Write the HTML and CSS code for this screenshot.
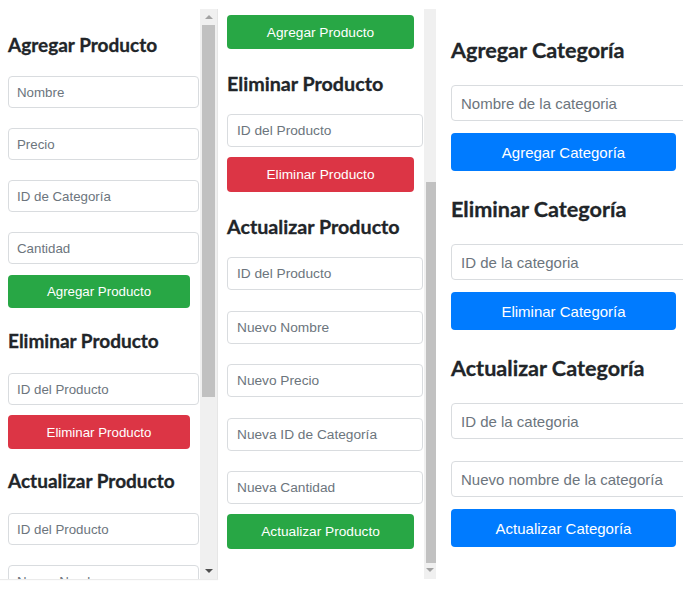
FILE: index.html
```html
<!DOCTYPE html>
<html lang="es">
<head>
<meta charset="utf-8">
<title>Productos y Categorías</title>
<link rel="stylesheet" href="styles.css">
</head>
<body class="stage">
  <section class="shot shot-left">
    <div class="view view-left">
      <h2 class="title t-first">Agregar Producto</h2>
      <input class="field f-first" type="text" placeholder="Nombre">
      <input class="field" type="text" placeholder="Precio">
      <input class="field" type="text" placeholder="ID de Categoría">
      <input class="field" type="text" placeholder="Cantidad">
      <button class="btn btn-green">Agregar Producto</button>
      <h2 class="title">Eliminar Producto</h2>
      <input class="field f-first" type="text" placeholder="ID del Producto">
      <button class="btn btn-red">Eliminar Producto</button>
      <h2 class="title t-tight">Actualizar Producto</h2>
      <input class="field f-first" type="text" placeholder="ID del Producto">
      <input class="field" type="text" placeholder="Nuevo Nombre">
    </div>
    <div class="sbar sbar-left">
      <div class="arrow arrow-up light"></div>
      <div class="thumb"></div>
      <div class="rest"></div>
      <div class="arrow arrow-down"></div>
    </div>
  </section>

  <section class="shot shot-mid">
    <div class="view view-mid">
      <button class="btn btn-green b-top">Agregar Producto</button>
      <h2 class="title">Eliminar Producto</h2>
      <input class="field f-first" type="text" placeholder="ID del Producto">
      <button class="btn btn-red">Eliminar Producto</button>
      <h2 class="title">Actualizar Producto</h2>
      <input class="field f-first" type="text" placeholder="ID del Producto">
      <input class="field" type="text" placeholder="Nuevo Nombre">
      <input class="field" type="text" placeholder="Nuevo Precio">
      <input class="field" type="text" placeholder="Nueva ID de Categoría">
      <input class="field" type="text" placeholder="Nueva Cantidad">
      <button class="btn btn-green">Actualizar Producto</button>
    </div>
    <div class="sbar sbar-mid">
      <div class="rest rest-top"></div>
      <div class="thumb"></div>
      <div class="arrow arrow-down light"></div>
    </div>
  </section>

  <section class="shot shot-right">
    <div class="view view-right">
      <h2 class="title t-first">Agregar Categoría</h2>
      <input class="field f-first" type="text" placeholder="Nombre de la categoria">
      <button class="btn btn-blue">Agregar Categoría</button>
      <h2 class="title">Eliminar Categoría</h2>
      <input class="field f-first" type="text" placeholder="ID de la categoria">
      <button class="btn btn-blue">Eliminar Categoría</button>
      <h2 class="title">Actualizar Categoría</h2>
      <input class="field f-first" type="text" placeholder="ID de la categoria">
      <input class="field" type="text" placeholder="Nuevo nombre de la categoría">
      <button class="btn btn-blue">Actualizar Categoría</button>
    </div>
  </section>
</body>
</html>
```

FILE: styles.css
```css
* { box-sizing: border-box; }

html, body { background: #ffffff; }

.stage {
  margin: 0;
  padding-top: 9px;
  display: flex;
  align-items: flex-start;
  font-family: "Liberation Sans", Arial, sans-serif;
  overflow: hidden;
  height: 589px;
}

.shot {
  display: flex;
  height: 570px;
  overflow: hidden;
  background: #ffffff;
  flex: none;
}

.shot-left {
  width: 218px;
  border-right: 1px solid #e6e6e6;
  box-shadow: 0 1px 1px rgba(0, 0, 0, 0.08);
}
.shot-mid { width: 220px; }
.shot-right { width: 245px; }

.view {
  display: flex;
  flex-direction: column;
  align-items: flex-start;
  overflow: hidden;
  flex: none;
}

/* headings */
.title {
  margin: 0;
  font-family: "Lato", "Open Sans", sans-serif;
  font-weight: 700;
  color: #212529;
  -webkit-text-stroke: 0.3px #212529;
  white-space: nowrap;
}

/* inputs */
.field {
  display: block;
  flex: none;
  border: 1px solid #d9dcdf;
  border-radius: 4px;
  background: #ffffff;
  font-family: "Liberation Sans", Arial, sans-serif;
  color: #495057;
  outline: none;
}
.field::placeholder { color: #6c757d; opacity: 1; }

/* buttons */
.btn {
  display: block;
  flex: none;
  border: none;
  border-radius: 4px;
  color: #ffffff;
  font-family: "Liberation Sans", Arial, sans-serif;
  text-align: center;
  padding: 0;
}
.btn-green { background: #28a745; }
.btn-red { background: #dc3545; }
.btn-blue { background: #007bff; }

/* ---------- left shot ---------- */
.view-left {
  width: 200px;
  padding-left: 8px;
}
.view-left .title { font-size: 19px; line-height: 24px; margin-top: 21px; }
.view-left .title.t-first { margin-top: 24px; }
.view-left .title.t-tight { margin-top: 20px; }
.view-left .field {
  width: 191px;
  height: 32px;
  margin-top: 20px;
  padding: 0 8px;
  font-size: 13.3px;
}
.view-left .field.f-first { margin-top: 20px; }
.view-left .title.t-first + .field { margin-top: 19px; }
.view-left .btn {
  width: 182px;
  height: 33px;
  margin-top: 11px;
  font-size: 13.3px;
}
.view-left .btn-red { height: 34px; margin-top: 10px; }

.sbar {
  display: flex;
  flex-direction: column;
  background: #f0f0f0;
  flex: none;
  height: 100%;
}
.sbar-left { width: 17px; }
.sbar-left .thumb {
  height: 372px;
  margin: 0 2px;
  background: #c1c1c1;
}
.rest { flex: 1; }

.arrow {
  height: 16px;
  flex: none;
  display: flex;
  align-items: center;
  justify-content: center;
}
.arrow::before {
  content: "";
  width: 0;
  height: 0;
  border-left: 4px solid transparent;
  border-right: 4px solid transparent;
}
.arrow-up::before { border-bottom: 4px solid #505050; }
.arrow-down::before { border-top: 4px solid #505050; }
.arrow-up.light::before { border-bottom-color: #a3a3a3; }
.arrow-down.light::before { border-top-color: #a3a3a3; }

/* ---------- middle shot ---------- */
.view-mid {
  width: 206px;
  padding-left: 9px;
}
.view-mid .title { font-size: 19.7px; line-height: 25px; margin-top: 22px; }
.view-mid .field {
  width: 196px;
  height: 33px;
  margin-top: 20.5px;
  padding: 0 9px;
  font-size: 13.7px;
}
.view-mid .field.f-first { margin-top: 18px; }
.view-mid .btn {
  width: 187px;
  height: 35px;
  margin-top: 10px;
  font-size: 13.7px;
}
.view-mid .btn.b-top { margin-top: 6px; height: 34px; }

.sbar-mid { width: 12px; }
.sbar-mid .rest-top { flex: none; height: 173px; }
.sbar-mid .thumb {
  height: 381px;
  margin-left: 2px;
  background: #c1c1c1;
}
.sbar-mid .arrow { flex: 1; align-items: flex-start; padding-top: 5px; }

/* ---------- right shot ---------- */
.view-right {
  width: 245px;
  padding-left: 13px;
  overflow: hidden;
}
.view-right .title { font-size: 21.6px; line-height: 26px; margin-top: 25px; }
.view-right .title.t-first { margin-top: 28px; }
.view-right .field {
  width: 245px;
  height: 36px;
  margin-top: 22px;
  padding: 0 9px;
  font-size: 15px;
}
.view-right .field.f-first { margin-top: 22px; }
.view-right .btn {
  width: 225px;
  height: 38px;
  margin-top: 12px;
  font-size: 15px;
}
```
